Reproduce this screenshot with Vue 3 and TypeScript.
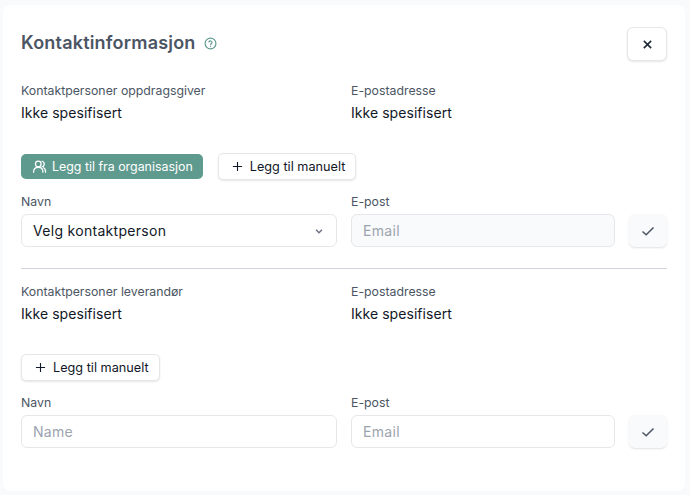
<template>
  <div class="page">
    <div class="card">
      <div class="head">
        <h1 class="title">Kontaktinformasjon</h1>
        <svg class="help" width="13" height="13" viewBox="0 0 24 24" fill="none" stroke="#5f9a8e" stroke-width="2.2" stroke-linecap="round">
          <circle cx="12" cy="12" r="10" />
          <path d="M9 9.2a3 3 0 0 1 5.8 1c0 2-2.8 2.4-2.8 4" />
          <path d="M12 17.6v.1" />
        </svg>
        <button class="close" type="button">
          <svg width="11" height="11" viewBox="0 0 12 12" fill="none" stroke="#1f2937" stroke-width="1.7">
            <path d="M2 2l8 8M10 2l-8 8" />
          </svg>
        </button>
      </div>

      <div class="info first">
        <div>
          <div class="label">Kontaktpersoner oppdragsgiver</div>
          <div class="value">Ikke spesifisert</div>
        </div>
        <div>
          <div class="label">E-postadresse</div>
          <div class="value">Ikke spesifisert</div>
        </div>
      </div>

      <div class="actions">
        <button class="btn primary" type="button">
          <svg width="15" height="15" viewBox="0 0 24 24" fill="none" stroke="#fff" stroke-width="2" stroke-linecap="round" stroke-linejoin="round">
            <circle cx="10" cy="8" r="4.5" />
            <path d="M2.5 21c0-4.5 3-7.5 7.5-7.5s7.5 3 7.5 7.5" />
            <path d="M16 3.6a4.5 4.5 0 0 1 0 8.8M18.5 14c2 1 3.2 3.5 3.2 7" />
          </svg>
          Legg til fra organisasjon
        </button>
        <button class="btn" type="button">
          <svg width="11" height="11" viewBox="0 0 12 12" fill="none" stroke="#111827" stroke-width="1.2"><path d="M6 1v10M1 6h10" /></svg>
          Legg til manuelt
        </button>
      </div>

      <div class="form">
        <div class="label">Navn</div>
        <div class="label">E-post</div>
        <div></div>
        <div class="select">
          <span>Velg kontaktperson</span>
          <svg width="10" height="10" viewBox="0 0 12 12" fill="none" stroke="#6b7280" stroke-width="1.8"><path d="M2.5 4.5L6 8l3.5-3.5" /></svg>
        </div>
        <input class="input disabled" placeholder="Email" disabled />
        <button class="check" type="button">
          <svg width="14" height="14" viewBox="0 0 14 14" fill="none" stroke="#4b5563" stroke-width="1.5"><path d="M1.5 7.5l3.7 3.3L12.5 3.5" /></svg>
        </button>
      </div>

      <hr class="rule" />

      <div class="info">
        <div>
          <div class="label">Kontaktpersoner leverandør</div>
          <div class="value">Ikke spesifisert</div>
        </div>
        <div>
          <div class="label">E-postadresse</div>
          <div class="value">Ikke spesifisert</div>
        </div>
      </div>

      <div class="actions">
        <button class="btn" type="button">
          <svg width="11" height="11" viewBox="0 0 12 12" fill="none" stroke="#111827" stroke-width="1.2"><path d="M6 1v10M1 6h10" /></svg>
          Legg til manuelt
        </button>
      </div>

      <div class="form">
        <div class="label">Navn</div>
        <div class="label">E-post</div>
        <div></div>
        <input class="input" placeholder="Name" />
        <input class="input" placeholder="Email" />
        <button class="check" type="button">
          <svg width="14" height="14" viewBox="0 0 14 14" fill="none" stroke="#4b5563" stroke-width="1.5"><path d="M1.5 7.5l3.7 3.3L12.5 3.5" /></svg>
        </button>
      </div>
    </div>
  </div>
</template>

<script setup lang="ts">
</script>

<style>
html,
body {
  margin: 0;
  background: #f9fafb;
}
</style>

<style scoped>
.page {
  width: 690px;
  height: 495px;
  padding: 5px 5px 4px 3px;
  box-sizing: border-box;
  font-family: Inter, "Liberation Sans", sans-serif;
  color: #111827;
}
.card {
  height: 100%;
  box-sizing: border-box;
  background: #fff;
  border-radius: 8px;
  padding: 22px 18px 0;
}
.head {
  display: flex;
  align-items: center;
  height: 34px;
}
.title {
  margin: -2px 0 0;
  font-size: 18px;
  line-height: 32px;
  font-weight: 600;
  letter-spacing: 0.2px;
  color: #4b5563;
}
.help {
  margin: -2px 0 0 8px;
}
.close {
  margin-left: auto;
  width: 40px;
  height: 34px;
  display: flex;
  align-items: center;
  justify-content: center;
  background: #fff;
  border: 1px solid #e5e7eb;
  border-radius: 6px;
  box-shadow: 0 1px 2px rgba(0, 0, 0, 0.1);
  padding: 0;
}
.info {
  display: grid;
  grid-template-columns: 316px 1fr;
  column-gap: 14px;
}
.info.first {
  margin-top: 22px;
}
.label {
  font-size: 12.3px;
  line-height: 16px;
  color: #4b5563;
}
.value {
  font-size: 14px;
  line-height: 20px;
  letter-spacing: 0.05px;
  margin-top: 4px;
  color: #111827;
}
.actions {
  display: flex;
  gap: 15px;
  margin-top: 30px;
  align-items: center;
}
.btn {
  display: flex;
  align-items: center;
  height: 27px;
  box-sizing: border-box;
  padding: 0 10px 0 13px;
  gap: 7px;
  font: 400 12.7px Inter, "Liberation Sans", sans-serif;
  color: #111827;
  background: #fff;
  border: 1px solid #e5e7eb;
  border-radius: 5px;
  box-shadow: 0 1px 2px rgba(0, 0, 0, 0.1);
}
.btn.primary {
  height: 25px;
  font-size: 12.4px;
  background: #5f9a8e;
  border: none;
  box-shadow: none;
  color: #fff;
  padding: 0 10px 0 11px;
  gap: 5px;
}
.form {
  display: grid;
  grid-template-columns: 316px 264px 38px;
  column-gap: 14px;
  row-gap: 4px;
  margin-top: 14px;
}
.select,
.input {
  height: 33px;
  box-sizing: border-box;
  border: 1px solid #e5e7eb;
  border-radius: 6px;
  padding: 0 11px;
  font: 400 14px Inter, "Liberation Sans", sans-serif;
  letter-spacing: 0.3px;
  color: #111827;
  background: #fff;
  width: 100%;
  outline: none;
}
.select {
  display: flex;
  align-items: center;
  justify-content: space-between;
  padding-right: 12px;
}
.input::placeholder {
  color: #9ca3af;
  opacity: 1;
}
.input.disabled {
  background: #f9fafb;
}
.check {
  height: 33px;
  display: flex;
  align-items: center;
  justify-content: center;
  background: #f9fafb;
  border: none;
  border-radius: 6px;
  box-shadow: 0 1px 2px rgba(0, 0, 0, 0.12);
  padding: 0;
}
.rule {
  border: none;
  border-top: 1px solid #d1d5db;
  margin: 21px 0 15px;
}
</style>
